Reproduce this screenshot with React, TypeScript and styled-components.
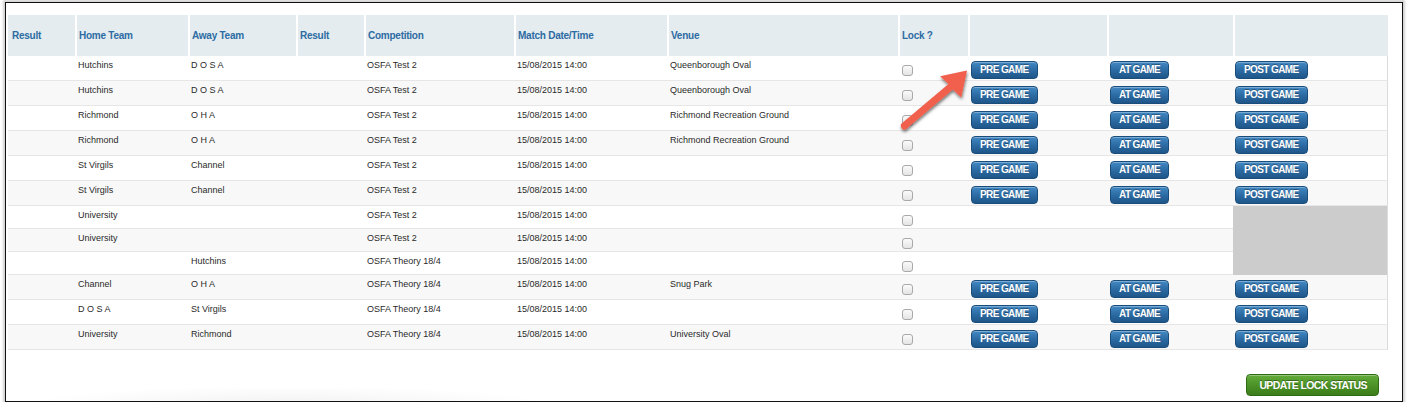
import React from "react";
import styled, { createGlobalStyle } from "styled-components";

const GlobalStyle = createGlobalStyle`
    html, body {
        margin: 0;
        padding: 0;
        background: #ffffff;
        font-family: "Liberation Sans", Arial, sans-serif;
    }
    * {
        box-sizing: border-box;
    }
`;

const Frame = styled.div`
    position: relative;
    width: 1398px;
    height: 400px;
    margin: 2px 4px 0 5px;
    border: 1px solid #111111;
    box-shadow: 0 0 2px 2px rgba(0, 0, 0, 0.18);
    background: #ffffff;
    padding: 12px 13px 0 2px;
    display: flex;
    flex-direction: column;
`;

const Table = styled.table`
    width: 1380px;
    table-layout: fixed;
    border-collapse: separate;
    border-spacing: 0;
`;

const HeadCell = styled.th<{ $first?: boolean }>`
    height: 41px;
    background: #e4ecef;
    border-left: ${(p) => (p.$first ? "0" : "2px solid #ffffff")};
    padding: 0 2px 0 ${(p) => (p.$first ? "4px" : "2px")};
    text-align: left;
    vertical-align: middle;
    color: #2c6ba3;
    font-size: 10px;
    font-weight: bold;
    letter-spacing: -0.25px;
    white-space: nowrap;
`;

const Row = styled.tr<{ $even: boolean; $short?: boolean }>`
    background: ${(p) => (p.$even ? "#f8f8f8" : "#ffffff")};
    td {
        height: ${(p) => (p.$short ? "23px" : "25px")};
    }
`;

const Cell = styled.td<{ $last?: boolean }>`
    padding: 4px 2px 0 3px;
    vertical-align: top;
    border-bottom: 1px solid #e6e6e6;
    border-right: ${(p) => (p.$last ? "1px solid #dcdcdc" : "0")};
    color: #2a2a2a;
    font-size: 9px;
    line-height: 11px;
    white-space: nowrap;
    overflow: hidden;
`;

const CheckCell = styled(Cell)`
    padding: 9px 0 0 4px;
`;

const ButtonCell = styled(Cell)<{ $inset: number }>`
    padding: 5px 0 0 ${(p) => p.$inset}px;
`;

const BlankCell = styled.td`
    background: #cccccc;
    border-right: 1px solid #dcdcdc;
`;

const Check = styled.input`
    appearance: none;
    display: block;
    width: 11px;
    height: 11px;
    margin: 0;
    border: 1px solid #a9a9a9;
    border-radius: 3px;
    background: linear-gradient(#fbfbfb, #e4e4e4);
`;

const GameButton = styled.button`
    height: 18px;
    padding: 0 8px;
    border: 1px solid #1b4d7b;
    border-radius: 4px;
    background: linear-gradient(#4289c4, #2b69a1 55%, #1e5689);
    box-shadow: inset 0 1px 0 rgba(255, 255, 255, 0.3);
    color: #ffffff;
    font-family: "Liberation Sans", Arial, sans-serif;
    font-size: 10px;
    font-weight: bold;
    letter-spacing: -0.6px;
    line-height: 16px;
    text-shadow: 0 -1px 0 rgba(0, 0, 0, 0.35);
    white-space: nowrap;
`;

const Footer = styled.div`
    display: flex;
    justify-content: flex-end;
    margin-top: 24px;
    padding-right: 9px;
    width: 1380px;
    height: 28px;
    background: radial-gradient(ellipse 260px 18px at 280px 30px, rgba(0, 0, 0, 0.05), rgba(0, 0, 0, 0));
`;

const UpdateButton = styled.button`
    height: 22px;
    padding: 0 11px 0 12px;
    border: 1px solid #2f6a15;
    border-radius: 4px;
    background: linear-gradient(#63ac3a, #4a9025 55%, #3c7d1b);
    box-shadow: inset 0 1px 0 rgba(255, 255, 255, 0.3);
    color: #ffffff;
    font-family: "Liberation Sans", Arial, sans-serif;
    font-size: 10.5px;
    font-weight: bold;
    letter-spacing: -0.6px;
    text-shadow: 0 -1px 0 rgba(0, 0, 0, 0.35);
`;

const Arrow = styled.svg`
    position: absolute;
    left: 889px;
    top: 57px;
    width: 80px;
    height: 75px;
    overflow: visible;
`;

type Match = {
    home: string;
    away: string;
    comp: string;
    venue: string;
    buttons: boolean;
};

const matches: Match[] = [
    { home: "Hutchins", away: "D O S A", comp: "OSFA Test 2", venue: "Queenborough Oval", buttons: true },
    { home: "Hutchins", away: "D O S A", comp: "OSFA Test 2", venue: "Queenborough Oval", buttons: true },
    { home: "Richmond", away: "O H A", comp: "OSFA Test 2", venue: "Richmond Recreation Ground", buttons: true },
    { home: "Richmond", away: "O H A", comp: "OSFA Test 2", venue: "Richmond Recreation Ground", buttons: true },
    { home: "St Virgils", away: "Channel", comp: "OSFA Test 2", venue: "", buttons: true },
    { home: "St Virgils", away: "Channel", comp: "OSFA Test 2", venue: "", buttons: true },
    { home: "University", away: "", comp: "OSFA Test 2", venue: "", buttons: false },
    { home: "University", away: "", comp: "OSFA Test 2", venue: "", buttons: false },
    { home: "", away: "Hutchins", comp: "OSFA Theory 18/4", venue: "", buttons: false },
    { home: "Channel", away: "O H A", comp: "OSFA Theory 18/4", venue: "Snug Park", buttons: true },
    { home: "D O S A", away: "St Virgils", comp: "OSFA Theory 18/4", venue: "", buttons: true },
    { home: "University", away: "Richmond", comp: "OSFA Theory 18/4", venue: "University Oval", buttons: true },
];

const columns = [67, 113, 108, 68, 150, 153, 231, 70, 139, 126, 155];
const headers = ["Result", "Home Team", "Away Team", "Result", "Competition", "Match Date/Time", "Venue", "Lock ?", "", "", ""];

export default function App(): React.JSX.Element {
    const firstBlank = matches.findIndex((m) => !m.buttons);

    return (
        <>
            <GlobalStyle />
            <Frame>
                <Table>
                    <colgroup>
                        {columns.map((w, i) => (
                            <col key={i} style={{ width: w }} />
                        ))}
                    </colgroup>
                    <thead>
                        <tr>
                            {headers.map((h, i) => (
                                <HeadCell key={i} $first={i === 0}>{h}</HeadCell>
                            ))}
                        </tr>
                    </thead>
                    <tbody>
                        {matches.map((m, i) => (
                            <Row key={i} $even={i % 2 === 1} $short={!m.buttons}>
                                <Cell></Cell>
                                <Cell>{m.home}</Cell>
                                <Cell>{m.away}</Cell>
                                <Cell></Cell>
                                <Cell>{m.comp}</Cell>
                                <Cell>15/08/2015 14:00</Cell>
                                <Cell>{m.venue}</Cell>
                                <CheckCell><Check type="checkbox" /></CheckCell>
                                {m.buttons ? (
                                    <>
                                        <ButtonCell $inset={3}><GameButton>PRE GAME</GameButton></ButtonCell>
                                        <ButtonCell $inset={3}><GameButton>AT GAME</GameButton></ButtonCell>
                                        <ButtonCell $inset={2} $last><GameButton>POST GAME</GameButton></ButtonCell>
                                    </>
                                ) : (
                                    <>
                                        <Cell></Cell>
                                        <Cell></Cell>
                                        {i === firstBlank && <BlankCell rowSpan={3} />}
                                    </>
                                )}
                            </Row>
                        ))}
                    </tbody>
                </Table>
                <Footer>
                    <UpdateButton>UPDATE LOCK STATUS</UpdateButton>
                </Footer>
                <Arrow viewBox="0 0 80 75">
                    <defs>
                        <filter id="arrowShadow" x="-30%" y="-30%" width="160%" height="160%">
                            <feDropShadow dx="0.5" dy="2" stdDeviation="1.6" floodColor="#000000" floodOpacity="0.55" />
                        </filter>
                    </defs>
                    <path
                        d="M72 10.5 L66.3 37.4 L57.9 29.5 L10.3 69.7 Q6 70.5 5.75 64.3 L53.5 24.1 L45.1 16.2 Z"
                        fill="#f0604d"
                        filter="url(#arrowShadow)"
                    />
                </Arrow>
            </Frame>
        </>
    );
}
